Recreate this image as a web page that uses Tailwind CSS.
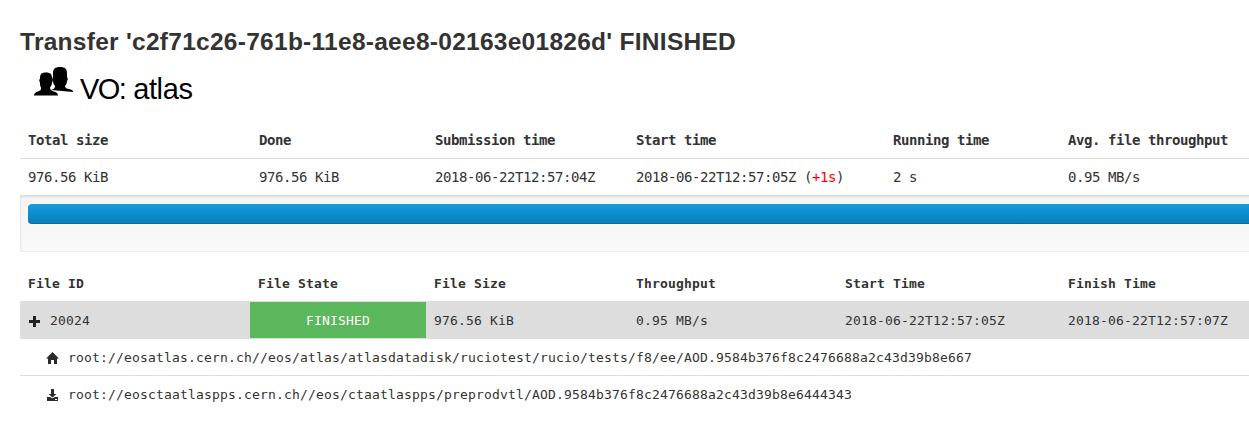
<!DOCTYPE html>
<html lang="en">
<head>
<meta charset="utf-8">
<title>Transfer</title>
<script src="https://cdn.jsdelivr.net/npm/@tailwindcss/browser@4"></script>
</head>
<body class="bg-white text-[#333] h-[422px] overflow-hidden pl-5 font-['DejaVu_Sans_Mono',monospace]">
<h1 class="pt-[22px] h-[61px] text-[24.5px] tracking-[0.272px] leading-[40px] font-bold whitespace-nowrap font-['Liberation_Sans',sans-serif]">Transfer 'c2f71c26-761b-11e8-aee8-02163e01826d' FINISHED</h1>
<div class="flex h-[61px] pl-[14px] text-black">
<svg class="mt-[6px] w-[39px] h-[29px] shrink-0" viewBox="0 0 39 29"><path d="M17 23c3-1 4-2 4-4-1-1-2-3-2-5-1-1-1-3 0-4V6c0-4 2-6 7-6s7 2 7 6v4c1 1 1 3 0 4 0 2-1 4-2 5 0 2 2 3 4 3 3 1 4 1 4 3z"/><path d="M0 28.500c0-2 1-3 4-4 3-1 3-2 3-4-1-1-1-3-1-5-1-1-1-3 0-4 0-4 1-6 6-6s6 2 6 6c1 1 1 3 0 4 0 2-1 4-2 5 0 2 1 3 4 4 3 1 4 2 4 4z"/></svg>
<h2 class="ml-[7px] mt-[8px] text-[29px] leading-[40px] whitespace-nowrap font-['Liberation_Sans',sans-serif]"><span class="tracking-[-1.6px]">VO:</span> <span class="tracking-[-0.4px]">atlas</span></h2>
</div>
<div class="w-[1240px] text-[14px] tracking-[-0.428px]">
<div class="grid grid-cols-[231px_176px_201px_257px_175px_200px] h-[36px] items-center font-bold whitespace-nowrap *:pl-2">
<span>Total size</span><span>Done</span><span>Submission time</span><span>Start time</span><span>Running time</span><span>Avg. file throughput</span></div>
<div class="grid grid-cols-[231px_176px_201px_257px_175px_200px] h-[37px] items-center border-t border-[#ddd] whitespace-nowrap *:pl-2">
<span>976.56 KiB</span><span>976.56 KiB</span><span>2018-06-22T12:57:04Z</span><span>2018-06-22T12:57:05Z (<span class="text-[#f00]">+1s</span>)</span><span>2 s</span><span>0.95 MB/s</span></div>
<div class="h-[57px] border-t border-[#ddd] bg-linear-to-b from-[#f5f5f5] to-[#f9f9f9] shadow-[inset_0_1px_2px_rgba(0,0,0,0.1),inset_1px_0_2px_rgba(0,0,0,0.05),inset_0_-1px_1px_rgba(0,0,0,0.03)] pt-2 pl-2"><div class="h-5 rounded bg-linear-to-b from-[#149bdf] to-[#0480be] shadow-[inset_0_-1px_0_rgba(0,0,0,0.15)]"></div></div>
</div>
<div class="mt-[13px] w-[1240px] text-[13px] tracking-[0.174px]">
<div class="grid grid-cols-[230px_176px_202px_209px_223px_200px] h-[36px] items-center font-bold whitespace-nowrap pt-px *:pl-2">
<span>File ID</span><span>File State</span><span>File Size</span><span>Throughput</span><span>Start Time</span><span>Finish Time</span></div>
<div class="grid grid-cols-[230px_176px_202px_209px_223px_200px] h-[38px] items-center border-y border-[#ddd] bg-[#ddd] whitespace-nowrap *:pt-[2px]">
<span class="pl-[9px] flex items-center"><svg class="w-[11px] h-[11px] mr-[10px]" viewBox="0 0 11 11" fill="#222"><path d="M4 0h3v4h4v3H7v4H4V7H0V4h4z"/></svg>20024</span>
<span class="h-full flex items-center justify-center bg-[#5bb75b] text-white">FINISHED</span><span class="pl-2">976.56 KiB</span><span class="pl-2">0.95 MB/s</span><span class="pl-2">2018-06-22T12:57:05Z</span><span class="pl-2">2018-06-22T12:57:07Z</span></div>
<div class="flex items-center h-[37px] pt-[2px] border-b border-[#ddd] pl-[26px] whitespace-nowrap"><svg class="w-[13px] h-[12px] mr-[9px]" viewBox="0 0 13 12" fill="#2b2b2b"><path d="M6.5 0L13 6.5H11V12H8V8H5v4H2V6.500H0z"/></svg>root://eosatlas.cern.ch//eos/atlas/atlasdatadisk/ruciotest/rucio/tests/f8/ee/AOD.9584b376f8c2476688a2c43d39b8e667</div>
<div class="flex items-center h-[37px] pl-[27px] whitespace-nowrap"><svg class="w-[11px] h-[12px] mr-[10px]" viewBox="0 0 11 12" fill="#2b2b2b"><path d="M4 0h3v5h2.500L5.500 8.500 1.500 5H4z"/><path fill-rule="evenodd" d="M0 8h3l2.500 1.200L8 8h3v4H0zM8 10v1h2v-1z"/></svg>root://eosctaatlaspps.cern.ch//eos/ctaatlaspps/preprodvtl/AOD.9584b376f8c2476688a2c43d39b8e6444343</div>
</div>
</body>
</html>
